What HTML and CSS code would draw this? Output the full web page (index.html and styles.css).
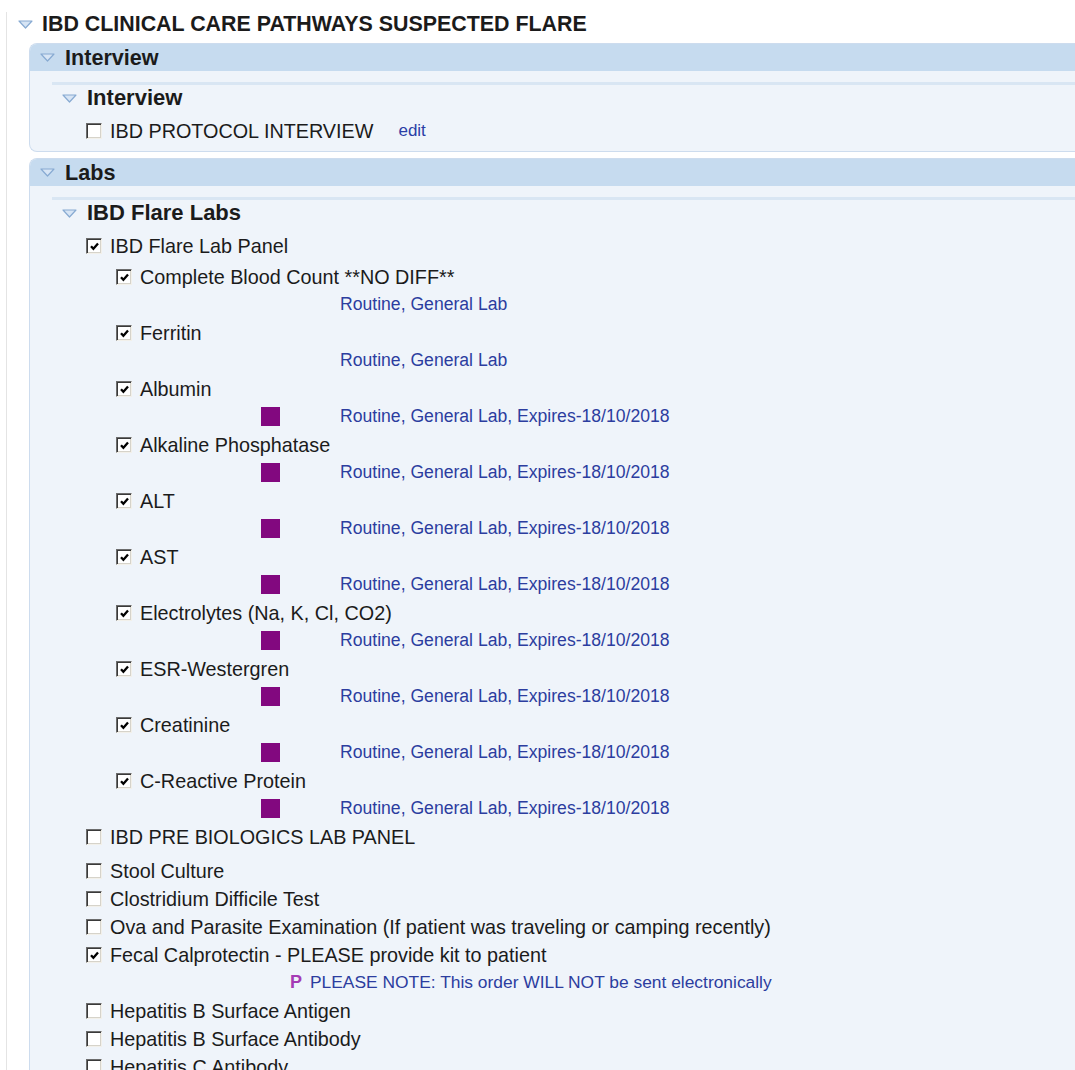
FILE: index.html
```html
<!DOCTYPE html>
<html lang="en">
<head>
<meta charset="utf-8">
<title>IBD Clinical Care Pathways</title>
<link rel="stylesheet" href="styles.css">
</head>
<body>
<div class="page">
  <h1 class="title">
    <svg class="tri" viewBox="0 0 15 9"><polygon points="1,1 14,1 7.5,8"/></svg>
    IBD CLINICAL CARE PATHWAYS SUSPECTED FLARE
  </h1>

  <section class="panel">
    <div class="panel-head">
      <svg class="tri" viewBox="0 0 15 9"><polygon points="1,1 14,1 7.5,8"/></svg>
      Interview
    </div>
    <div class="panel-body">
      <div class="group">
        <h3 class="group-head">
          <svg class="tri" viewBox="0 0 15 9"><polygon points="1,1 14,1 7.5,8"/></svg>
          Interview
        </h3>
        <ul class="items">
          <li class="row"><span class="cb"></span>IBD PROTOCOL INTERVIEW<a class="edit">edit</a></li>
        </ul>
      </div>
    </div>
  </section>

  <section class="panel panel-labs">
    <div class="panel-head">
      <svg class="tri" viewBox="0 0 15 9"><polygon points="1,1 14,1 7.5,8"/></svg>
      Labs
    </div>
    <div class="panel-body">
      <div class="group">
        <h3 class="group-head">
          <svg class="tri" viewBox="0 0 15 9"><polygon points="1,1 14,1 7.5,8"/></svg>
          IBD Flare Labs
        </h3>
        <ul class="items">
          <li>
            <div class="row"><span class="cb on"><svg viewBox="0 0 11 11"><polyline points="2,5.2 4.4,7.8 9,2.6"/></svg></span>IBD Flare Lab Panel</div>
            <ul class="children">
              <li>
                <div class="row"><span class="cb on"><svg viewBox="0 0 11 11"><polyline points="2,5.2 4.4,7.8 9,2.6"/></svg></span>Complete Blood Count **NO DIFF**</div>
                <div class="detail"><span class="slot"></span>Routine, General Lab</div>
              </li>
              <li>
                <div class="row"><span class="cb on"><svg viewBox="0 0 11 11"><polyline points="2,5.2 4.4,7.8 9,2.6"/></svg></span>Ferritin</div>
                <div class="detail"><span class="slot"></span>Routine, General Lab</div>
              </li>
              <li>
                <div class="row"><span class="cb on"><svg viewBox="0 0 11 11"><polyline points="2,5.2 4.4,7.8 9,2.6"/></svg></span>Albumin</div>
                <div class="detail"><span class="slot"><i class="flag"></i></span>Routine, General Lab, Expires-18/10/2018</div>
              </li>
              <li>
                <div class="row"><span class="cb on"><svg viewBox="0 0 11 11"><polyline points="2,5.2 4.4,7.8 9,2.6"/></svg></span>Alkaline Phosphatase</div>
                <div class="detail"><span class="slot"><i class="flag"></i></span>Routine, General Lab, Expires-18/10/2018</div>
              </li>
              <li>
                <div class="row"><span class="cb on"><svg viewBox="0 0 11 11"><polyline points="2,5.2 4.4,7.8 9,2.6"/></svg></span>ALT</div>
                <div class="detail"><span class="slot"><i class="flag"></i></span>Routine, General Lab, Expires-18/10/2018</div>
              </li>
              <li>
                <div class="row"><span class="cb on"><svg viewBox="0 0 11 11"><polyline points="2,5.2 4.4,7.8 9,2.6"/></svg></span>AST</div>
                <div class="detail"><span class="slot"><i class="flag"></i></span>Routine, General Lab, Expires-18/10/2018</div>
              </li>
              <li>
                <div class="row"><span class="cb on"><svg viewBox="0 0 11 11"><polyline points="2,5.2 4.4,7.8 9,2.6"/></svg></span>Electrolytes (Na, K, Cl, CO2)</div>
                <div class="detail"><span class="slot"><i class="flag"></i></span>Routine, General Lab, Expires-18/10/2018</div>
              </li>
              <li>
                <div class="row"><span class="cb on"><svg viewBox="0 0 11 11"><polyline points="2,5.2 4.4,7.8 9,2.6"/></svg></span>ESR-Westergren</div>
                <div class="detail"><span class="slot"><i class="flag"></i></span>Routine, General Lab, Expires-18/10/2018</div>
              </li>
              <li>
                <div class="row"><span class="cb on"><svg viewBox="0 0 11 11"><polyline points="2,5.2 4.4,7.8 9,2.6"/></svg></span>Creatinine</div>
                <div class="detail"><span class="slot"><i class="flag"></i></span>Routine, General Lab, Expires-18/10/2018</div>
              </li>
              <li>
                <div class="row"><span class="cb on"><svg viewBox="0 0 11 11"><polyline points="2,5.2 4.4,7.8 9,2.6"/></svg></span>C-Reactive Protein</div>
                <div class="detail"><span class="slot"><i class="flag"></i></span>Routine, General Lab, Expires-18/10/2018</div>
              </li>
            </ul>
          </li>
          <li class="row"><span class="cb"></span>IBD PRE BIOLOGICS LAB PANEL</li>
          <li class="row spaced"><span class="cb"></span>Stool Culture</li>
          <li class="row"><span class="cb"></span>Clostridium Difficile Test</li>
          <li class="row"><span class="cb"></span>Ova and Parasite Examination (If patient was traveling or camping recently)</li>
          <li>
            <div class="row"><span class="cb on"><svg viewBox="0 0 11 11"><polyline points="2,5.2 4.4,7.8 9,2.6"/></svg></span>Fecal Calprotectin - PLEASE provide kit to patient</div>
            <div class="note"><b class="p-mark">P</b>PLEASE NOTE: This order WILL NOT be sent electronically</div>
          </li>
          <li class="row"><span class="cb"></span>Hepatitis B Surface Antigen</li>
          <li class="row"><span class="cb"></span>Hepatitis B Surface Antibody</li>
          <li class="row"><span class="cb"></span>Hepatitis C Antibody</li>
        </ul>
      </div>
    </div>
  </section>
</div>
</body>
</html>
```

FILE: styles.css
```css
html {
  overflow: hidden;
  background: #fff;
}

body {
  margin: 0;
  font-family: "Liberation Sans", Arial, sans-serif;
  color: #1b1b1b;
}

ul {
  list-style: none;
  margin: 0;
  padding: 0;
}

/* outer pathway container with its faint left rule */
.page {
  margin: 12px 0 0 6px;
  border-left: 1px solid #e4e4e4;
  padding-left: 11px;
  min-height: 1100px;
}

/* collapse triangle used by every heading */
.tri {
  width: 15px;
  height: 9px;
  flex: none;
}
.tri polygon {
  fill: #d7e5f5;
  stroke: #87aad2;
  stroke-width: 1.2;
  stroke-linejoin: round;
}

.title {
  display: flex;
  align-items: center;
  gap: 9px;
  margin: 0;
  height: 24px;
  font-size: 21.4px;
  font-weight: bold;
  line-height: 24px;
}

/* collapsible section panels */
.panel {
  margin: 7px -40px 0 11px;
  border: 1px solid #cddcee;
  border-right: none;
  border-radius: 8px 0 0 8px;
  background: #eff4fa;
}
.panel-labs {
  margin-top: 6px;
}

.panel-head {
  display: flex;
  align-items: center;
  gap: 10px;
  height: 27px;
  padding-left: 10px;
  background: #c6dbef;
  border-radius: 7px 0 0 0;
  font-size: 21.6px;
  font-weight: bold;
  line-height: 27px;
}

.panel-body {
  padding: 11px 0 6px 22px;
}

.group {
  border-top: 3px solid #d9e6f3;
}

.group-head {
  display: flex;
  align-items: center;
  gap: 10px;
  margin: 0;
  padding-left: 10px;
  height: 26px;
  font-size: 22px;
  font-weight: bold;
  line-height: 26px;
}

.items {
  margin-top: 6px;
  padding-left: 34px;
  font-size: 19.8px;
}

.row {
  display: flex;
  align-items: center;
  height: 28px;
  white-space: nowrap;
}

.row.spaced {
  margin-top: 6px;
}

/* classic sunken checkbox */
.cb {
  flex: none;
  box-sizing: border-box;
  width: 16px;
  height: 16px;
  margin-right: 8px;
  background: #fff;
  border: 1px solid;
  border-color: #6c6c6c #f2f0ea #f2f0ea #6c6c6c;
  box-shadow: inset 1px 1px 0 #3a3a3a, inset -1px -1px 0 #d6d3ca;
  position: relative;
}
.cb svg {
  position: absolute;
  left: 2px;
  top: 2px;
  width: 11px;
  height: 11px;
}
.cb polyline {
  fill: none;
  stroke: #000;
  stroke-width: 2.3;
}

.edit {
  margin-left: 25px;
  font-size: 17px;
  color: #2a3ea6;
}

.children {
  margin-top: 3px;
  padding-left: 30px;
}

.detail {
  display: flex;
  align-items: center;
  height: 26px;
  margin-bottom: 2px;
  padding-left: 145px;
  font-size: 17.6px;
  color: #2c3d9f;
  white-space: nowrap;
}

.slot {
  display: flex;
  align-items: center;
  width: 79px;
  flex: none;
}

/* purple order-status marker */
.flag {
  display: block;
  width: 19px;
  height: 19px;
  background: #82087f;
}

.note {
  display: flex;
  align-items: center;
  height: 26px;
  margin-bottom: 2px;
  padding-left: 204px;
  font-size: 17.4px;
  color: #2c3d9f;
  white-space: nowrap;
}

.p-mark {
  width: 20px;
  color: #a53bb5;
  font-weight: bold;
  font-size: 18px;
}
```
